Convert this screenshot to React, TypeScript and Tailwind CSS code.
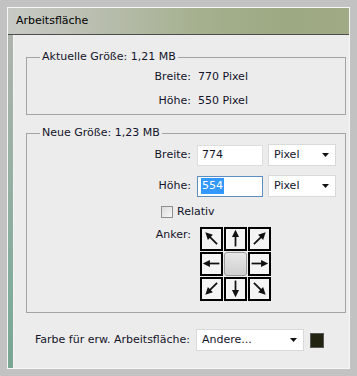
import React from "react";

const font = { fontFamily: '"DejaVu Sans", Verdana, sans-serif' };

function Arrow({ angle }: { angle: number }) {
  return (
    <svg width="19" height="19" viewBox="0 0 24 24">
      <g transform={`rotate(${angle} 12 12)`}>
        <line x1="12" y1="22" x2="12" y2="8" stroke="#111" strokeWidth="2.2" />
        <polygon points="12,1 7.5,10 16.5,10" fill="#111" />
      </g>
    </svg>
  );
}

function Cell({ angle }: { angle?: number }) {
  if (angle === undefined) {
    return (
      <div className="w-[23px] h-[24px] rounded-[3px] border border-[#9a9a9a] bg-gradient-to-b from-[#e8e8e8] to-[#cfcfcf]" />
    );
  }
  return (
    <div className="w-[23px] h-[24px] border-2 border-black bg-[#f4f4f4] flex items-center justify-center">
      <Arrow angle={angle} />
    </div>
  );
}

function Select({ label, w }: { label: string; w: string }) {
  return (
    <div className={`${w} h-[22px] bg-white border border-[#d9d9d9] flex items-center justify-between pl-[5px] pr-[6px]`}>
      <span>{label}</span>
      <svg width="7" height="4" viewBox="0 0 7 4">
        <polygon points="0,0 7,0 3.5,4" fill="#111" />
      </svg>
    </div>
  );
}

export default function App() {
  return (
    <div className="w-[357px] h-[376px] bg-[#c2c2c2] p-[7px] text-[11px] text-[#14142a]" style={font}>
      <div className="h-full border border-[#f6f6f6] flex flex-col">
        <div className="h-[27px] flex items-center pl-[8px] text-[11px] text-black border-b border-[#4d4d4d] bg-[linear-gradient(to_right,#c8cac5_0%,#b9beb0_25%,#a6b190_55%,#9ca982_80%,#a0aa84_100%)]">
          Arbeitsfläche
        </div>
        <div className="flex-1 flex">
          <div className="w-[6px] bg-[linear-gradient(to_bottom,#aeb3ad_0%,#98b0a4_40%,#82ac9c_75%,#7aa593_100%)] border-r border-[#f4f4f4]" />
          <div className="flex-1 bg-[#ececec] pl-[12px] pr-[3px] pt-[15px] flex flex-col">
            <fieldset className="border border-[#a3a3a3] h-[65px] pl-[14px]">
              <legend className="px-[2px] ml-[-1px] leading-[14px]">Aktuelle Größe: 1,21 MB</legend>
              <div className="grid grid-cols-[150px_1fr] gap-x-[7px] gap-y-[10px] mt-[6px] leading-[14px]">
                <span className="text-right">Breite:</span>
                <span>770 Pixel</span>
                <span className="text-right">Höhe:</span>
                <span>550 Pixel</span>
              </div>
            </fieldset>
            <fieldset className="border border-[#a3a3a3] mt-[11px] h-[187px] pl-[14px]">
              <legend className="px-[2px] ml-[-1px] leading-[14px]">Neue Größe: 1,23 MB</legend>
              <div className="flex flex-col gap-[9px] mt-[4px]">
                <div className="flex items-center">
                  <span className="w-[150px] text-right">Breite:</span>
                  <div className="ml-[6px] w-[66px] h-[21px] bg-white border border-[#dedede] flex items-center pl-[4px]">774</div>
                  <div className="ml-[5px]"><Select label="Pixel" w="w-[68px]" /></div>
                </div>
                <div className="flex items-center">
                  <span className="w-[150px] text-right">Höhe:</span>
                  <div className="ml-[6px] w-[66px] h-[21px] bg-white border border-[#5b8fc0] flex items-center pl-[3px]">
                    <span className="bg-[#3399ff] text-white px-[1px]">554</span>
                  </div>
                  <div className="ml-[5px]"><Select label="Pixel" w="w-[68px]" /></div>
                </div>
              </div>
              <div className="flex items-center mt-[7px] ml-[120px]">
                <div className="w-[12px] h-[12px] border border-[#8f8f8f] bg-gradient-to-br from-[#dcdcdc] to-[#f6f6f6]" />
                <span className="ml-[4px]">Relativ</span>
              </div>
              <div className="flex mt-[6px]">
                <span className="w-[150px] text-right mt-[0px]">Anker:</span>
                <div className="ml-[9px] grid grid-cols-[23px_23px_23px] gap-[1px]">
                  <Cell angle={-45} />
                  <Cell angle={0} />
                  <Cell angle={45} />
                  <Cell angle={-90} />
                  <Cell />
                  <Cell angle={90} />
                  <Cell angle={-135} />
                  <Cell angle={180} />
                  <Cell angle={135} />
                </div>
              </div>
            </fieldset>
            <div className="flex items-center mt-[16px] ml-[9px]">
              <span>Farbe für erw. Arbeitsfläche:</span>
              <div className="ml-[6px]"><Select label="Andere..." w="w-[108px]" /></div>
              <div className="ml-[6px] w-[14px] h-[15px] bg-[#222211] border border-[#555]" />
            </div>
          </div>
        </div>
      </div>
    </div>
  );
}
